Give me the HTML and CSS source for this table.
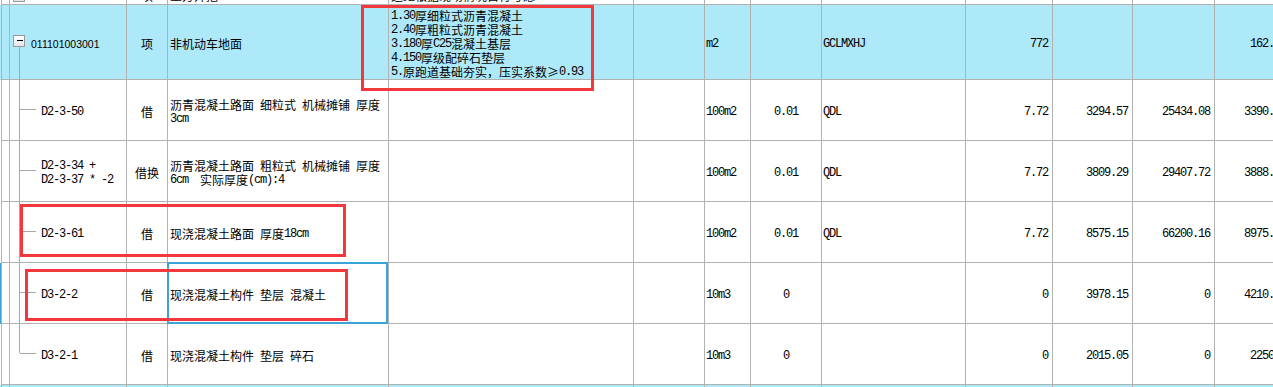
FILE: index.html
```html
<!DOCTYPE html>
<html lang="zh-CN">
<head>
<meta charset="utf-8">
<title>清单定额</title>
<link rel="stylesheet" href="styles.css">
</head>
<body>
<div class="view">
  <div class="sheet">
    <div class="row prev">
      <div class="ind"></div>
      <div class="c c0"></div>
      <div class="c tree"><span class="box"></span></div>
      <div class="c ctr"><span class="z">项</span></div>
      <div class="c"><span class="z">土方开挖</span></div>
      <div class="c"><span class="z">运距根据现场情况自行考虑</span></div>
      <div class="c"></div><div class="c"></div><div class="c"></div><div class="c"></div>
      <div class="c"></div><div class="c"></div><div class="c"></div><div class="c"></div>
    </div>

    <div class="row main">
      <div class="ind"></div>
      <div class="c c0"></div>
      <div class="c tree parent"><span class="box"></span><span class="sans">011101003001</span></div>
      <div class="c ctr"><span class="z">项</span></div>
      <div class="c"><span class="z">非机动车地面</span></div>
      <div class="c desc">
        <div class="t">
          <div class="ln">1.30<span class="z">厚细粒式沥青混凝土</span></div>
          <div class="ln">2.40<span class="z">厚粗粒式沥青混凝土</span></div>
          <div class="ln">3.180<span class="z">厚</span>C25<span class="z">混凝土基层</span></div>
          <div class="ln">4.150<span class="z">厚级配碎石垫层</span></div>
          <div class="ln">5.<span class="z">原跑道基础夯实，压实系数≥</span>0.93</div>
        </div>
      </div>
      <div class="c"></div>
      <div class="c l1">m2</div>
      <div class="c ctr"></div>
      <div class="c l1">GCLMXHJ</div>
      <div class="c r">772</div>
      <div class="c r"></div>
      <div class="c r"></div>
      <div class="c r">162.54</div>
    </div>

    <div class="row sub">
      <div class="ind"></div>
      <div class="c c0"></div>
      <div class="c tree child">D2-3-50</div>
      <div class="c ctr"><span class="z">借</span></div>
      <div class="c"><div class="t"><span class="z">沥青混凝土路面</span> <span class="z">细粒式</span> <span class="z">机械摊铺</span> <span class="z">厚度</span> 3cm</div></div>
      <div class="c"></div>
      <div class="c"></div>
      <div class="c l1">100m2</div>
      <div class="c ctr">0.01</div>
      <div class="c l1">QDL</div>
      <div class="c r">7.72</div>
      <div class="c r">3294.57</div>
      <div class="c r">25434.08</div>
      <div class="c r">3390.28</div>
    </div>

    <div class="row sub">
      <div class="ind"></div>
      <div class="c c0"></div>
      <div class="c tree child"><div class="t">D2-3-34 +<br>D2-3-37 * -2</div></div>
      <div class="c ctr"><span class="z">借换</span></div>
      <div class="c"><div class="t"><span class="z">沥青混凝土路面</span> <span class="z">粗粒式</span> <span class="z">机械摊铺</span> <span class="z">厚度</span> 6cm&nbsp; <span class="z">实际厚度</span>(cm):4</div></div>
      <div class="c"></div>
      <div class="c"></div>
      <div class="c l1">100m2</div>
      <div class="c ctr">0.01</div>
      <div class="c l1">QDL</div>
      <div class="c r">7.72</div>
      <div class="c r">3809.29</div>
      <div class="c r">29407.72</div>
      <div class="c r">3888.41</div>
    </div>

    <div class="row sub">
      <div class="ind"></div>
      <div class="c c0"></div>
      <div class="c tree child">D2-3-61</div>
      <div class="c ctr"><span class="z">借</span></div>
      <div class="c"><div class="t"><span class="z">现浇混凝土路面</span> <span class="z">厚度</span>18cm</div></div>
      <div class="c"></div>
      <div class="c"></div>
      <div class="c l1">100m2</div>
      <div class="c ctr">0.01</div>
      <div class="c l1">QDL</div>
      <div class="c r">7.72</div>
      <div class="c r">8575.15</div>
      <div class="c r">66200.16</div>
      <div class="c r">8975.16</div>
    </div>

    <div class="row sub current">
      <div class="ind"></div>
      <div class="c c0"></div>
      <div class="c tree child">D3-2-2</div>
      <div class="c ctr"><span class="z">借</span></div>
      <div class="c sel"><div class="t"><span class="z">现浇混凝土构件</span> <span class="z">垫层</span> <span class="z">混凝土</span></div></div>
      <div class="c"></div>
      <div class="c"></div>
      <div class="c l1">10m3</div>
      <div class="c ctr">0</div>
      <div class="c l1"></div>
      <div class="c r">0</div>
      <div class="c r">3978.15</div>
      <div class="c r">0</div>
      <div class="c r">4210.61</div>
    </div>

    <div class="row sub">
      <div class="ind"></div>
      <div class="c c0"></div>
      <div class="c tree child last">D3-2-1</div>
      <div class="c ctr"><span class="z">借</span></div>
      <div class="c"><div class="t"><span class="z">现浇混凝土构件</span> <span class="z">垫层</span> <span class="z">碎石</span></div></div>
      <div class="c"></div>
      <div class="c"></div>
      <div class="c l1">10m3</div>
      <div class="c ctr">0</div>
      <div class="c l1"></div>
      <div class="c r">0</div>
      <div class="c r">2015.05</div>
      <div class="c r">0</div>
      <div class="c r">2250.5</div>
    </div>

    <div class="row main">
      <div class="ind"></div>
      <div class="c c0"></div>
      <div class="c tree"><span class="box"></span><span class="sans">011101003002</span></div>
      <div class="c ctr"><span class="z">项</span></div>
      <div class="c"></div><div class="c"></div><div class="c"></div><div class="c"></div>
      <div class="c"></div><div class="c"></div><div class="c"></div><div class="c"></div>
      <div class="c"></div><div class="c"></div>
    </div>
  </div>

  <div class="mark m1"></div>
  <div class="mark m2"></div>
  <div class="mark m3"></div>
</div>
</body>
</html>
```

FILE: styles.css
```css
* { box-sizing: border-box; }

html, body {
  margin: 0;
  padding: 0;
  background: #ffffff;
}

body {
  width: 1273px;
  height: 387px;
  overflow: hidden;
  font-family: "Liberation Mono", "Noto Sans CJK SC", monospace;
  font-size: 12px;
  color: #000;
}

.view {
  position: relative;
  width: 1273px;
  height: 387px;
  overflow: hidden;
}

.sheet {
  width: 1291px;
  margin-top: -13px;
}

.row {
  display: grid;
  grid-template-columns: 1px 9px 117px 41px 221px 245px 71px 46px 71px 144px 87px 80px 82px 76px;
  grid-template-rows: 100%;
  height: 61px;
  overflow: hidden;
}

.row.prev { height: 18px; }

.row.main {
  height: 75px;
  background: #aee9f9;
}

.row.current { overflow: visible; }
.row.current .ind { background: #3aa5d8; }

.c {
  position: relative;
  display: flex;
  align-items: center;
  padding: 4px 2px 0 2px;
  border-right: 1px solid #b2b2b2;
  border-bottom: 1px solid #b2b2b2;
  line-height: 14px;
  letter-spacing: -1.2px;
  white-space: nowrap;
}

.row.prev .c { padding-top: 0; }

.c .t { white-space: normal; }
.ln { height: 14px; }

.c0 { border-left: 1px solid #b2b2b2; padding: 0; }

.z {
  letter-spacing: 0;
  font-family: "Noto Sans CJK SC", sans-serif;
  line-height: 14px;
  vertical-align: top;
}

.ctr { justify-content: center; }
.r { justify-content: flex-end; padding-right: 4px; }
.l1 { padding-left: 1px; }

/* tree column */
.tree { padding-left: 3px; }
.tree.child { padding-left: 31px; }

.box {
  width: 12px;
  height: 12px;
  flex: none;
  margin-top: -6px;
  border: 1px solid #9a9a9a;
  background: linear-gradient(#ffffff, #e4e4e4);
  position: relative;
}
.row.prev .box { margin-top: 0; }
.box::after {
  content: "";
  position: absolute;
  left: 3px;
  top: 4px;
  width: 6px;
  height: 1px;
  background: #000;
}

.sans {
  font-family: "Liberation Sans", "Noto Sans", sans-serif;
  font-size: 10.5px;
  letter-spacing: 0;
  margin-left: 6px;
}

.tree.parent::before {
  content: "";
  position: absolute;
  left: 9px;
  top: 42px;
  bottom: -1px;
  width: 1px;
  background: #a8a8a8;
}

.tree.child::before {
  content: "";
  position: absolute;
  left: 9px;
  top: -1px;
  bottom: -1px;
  width: 1px;
  background: #a8a8a8;
}
.tree.child.last::before { bottom: auto; height: 30px; }

.tree.child::after {
  content: "";
  position: absolute;
  left: 10px;
  top: 29px;
  width: 16px;
  height: 1px;
  background: #a8a8a8;
}

/* current cell */
.sel::after {
  content: "";
  position: absolute;
  left: -1px;
  top: -1px;
  right: 0;
  bottom: -1px;
  border: 2px solid #3aa5d8;
}

/* red annotation boxes */
.mark {
  position: absolute;
  border: 3px solid #f2383c;
}
.m1 { left: 361px; top: 5px; width: 233px; height: 86px; }
.m2 { left: 20px; top: 204px; width: 326px; height: 53px; }
.m3 { left: 25px; top: 269px; width: 323px; height: 52px; }
```
